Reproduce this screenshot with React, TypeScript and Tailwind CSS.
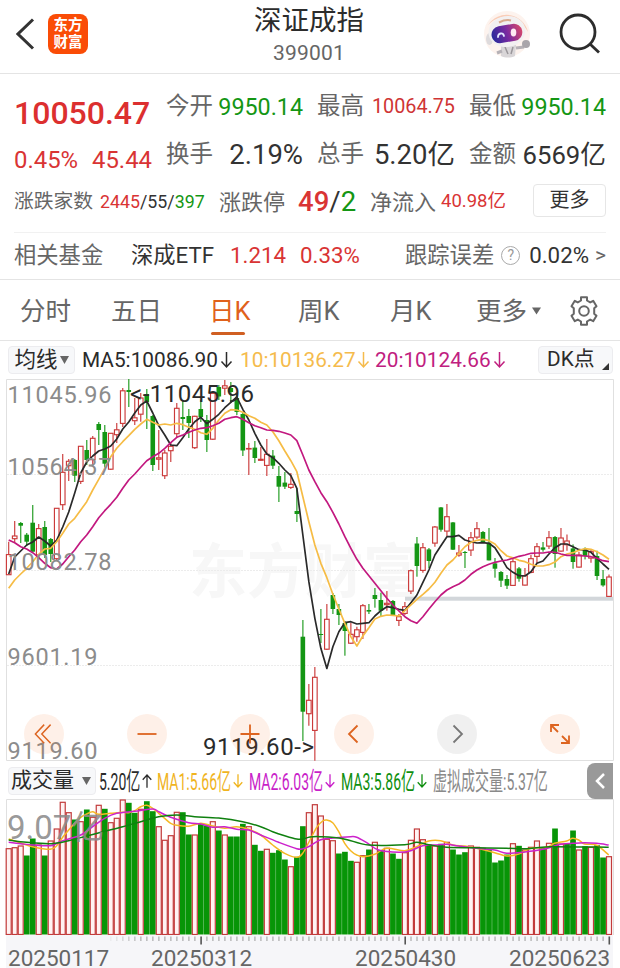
import { memo, type ReactNode } from "react";

const STEP = 6.003;
const FIRST_X = 8.7;
const xAt = (i: number) => FIRST_X + i * STEP;

// [direction, high, body top, body bottom, low]
type Candle = ["r" | "g", number, number, number, number];

const candles: Candle[] = [
  ["r", 541.7, 554.3, 575, 575],
  ["r", 521, 535.7, 539, 542],
  ["g", 522, 523, 525.7, 543],
  ["g", 533, 534.7, 541.7, 546],
  ["g", 505, 522.7, 551.7, 552],
  ["r", 524, 528.3, 555, 558],
  ["g", 521, 527, 555, 558],
  ["g", 538, 539, 554, 562],
  ["r", 508, 508, 559, 560],
  ["r", 454, 472, 505, 510],
  ["r", 459, 461, 466, 481],
  ["g", 459, 460, 475.7, 482],
  ["r", 446, 446, 481.7, 484],
  ["g", 440, 450, 460, 465],
  ["r", 436, 438, 460, 466],
  ["g", 422, 424, 430, 445],
  ["g", 425, 432, 463.7, 468],
  ["r", 433, 433, 469.5, 470],
  ["r", 423, 429.5, 435, 443],
  ["r", 388, 390.5, 423.7, 427],
  ["g", 379, 390, 392, 407],
  ["r", 398, 417.5, 421, 425],
  ["r", 393, 397.7, 414.5, 421.7],
  ["g", 389, 394, 402, 429],
  ["g", 415, 416, 465, 471],
  ["r", 430, 457.5, 459.5, 470],
  ["r", 450, 452.7, 476, 479],
  ["r", 443, 446, 451, 462],
  ["r", 403, 408, 434, 438],
  ["g", 401, 417, 419, 430],
  ["g", 409, 416, 423, 438],
  ["r", 415.7, 416, 448, 449],
  ["g", 400, 409, 417, 422],
  ["g", 415, 420, 440, 452],
  ["r", 392, 393, 439.5, 440],
  ["g", 385, 387, 396.5, 400],
  ["r", 380, 385.5, 388.5, 395],
  ["g", 382, 388, 392, 403],
  ["g", 393, 398, 412, 415],
  ["g", 412, 414, 450.5, 456],
  ["r", 443, 448.2, 449, 475],
  ["g", 441, 447.6, 458, 463],
  ["r", 447, 459, 460.6, 461],
  ["r", 439, 454, 465.7, 476],
  ["g", 450, 455.6, 465.7, 469],
  ["g", 466, 476, 486.7, 502],
  ["g", 472, 482.6, 486.7, 489],
  ["r", 473, 484, 487.7, 489],
  ["g", 488, 511, 514, 522],
  ["g", 620, 636.7, 711.7, 741],
  ["r", 684, 700, 714, 725.7],
  ["r", 667, 677, 730.7, 760.7],
  ["g", 609, 634, 635, 643],
  ["r", 604, 619, 649.5, 650],
  ["g", 593, 595, 609, 614],
  ["g", 604, 609, 615, 625],
  ["g", 621, 623, 631, 655.7],
  ["r", 623, 634, 643.5, 644],
  ["r", 626.7, 629.5, 637, 641.7],
  ["r", 604, 605.4, 632.7, 639],
  ["g", 604, 610, 611.6, 614],
  ["g", 588, 595, 599, 607.7],
  ["g", 592.7, 600, 610.7, 616],
  ["r", 591, 603, 605, 610.7],
  ["g", 600, 601, 615, 616],
  ["r", 614, 616.4, 620.7, 626],
  ["r", 602, 606.4, 613.7, 615],
  ["r", 569.5, 570.4, 591.4, 594],
  ["g", 537, 543.5, 566, 576.7],
  ["r", 543, 547.4, 570.7, 572.7],
  ["g", 548, 549.4, 561, 568],
  ["r", 526, 526.7, 543.4, 546.7],
  ["g", 507, 507.4, 529.7, 531.7],
  ["r", 504, 516.4, 531.4, 536],
  ["g", 522, 522.4, 549.7, 550],
  ["r", 545, 552.7, 555.4, 556.7],
  ["g", 551, 552, 553, 568],
  ["r", 532, 537.4, 550.4, 556],
  ["r", 522, 528.4, 537.4, 539],
  ["g", 531, 532, 542.4, 543],
  ["g", 528, 542.7, 560.4, 560.4],
  ["g", 558, 563.4, 568.7, 577.7],
  ["g", 571, 572, 580.7, 587],
  ["g", 575, 579, 585.7, 589],
  ["r", 558, 561.4, 585.7, 586],
  ["g", 567, 568.4, 578.7, 581.7],
  ["r", 568, 575.4, 585.4, 585.4],
  ["r", 555, 558.4, 572.7, 573.3],
  ["r", 543, 546.4, 556.7, 563],
  ["g", 542, 547.4, 549.7, 551.7],
  ["r", 531, 537.4, 546.4, 549],
  ["g", 536, 537, 554, 567.7],
  ["r", 528, 537.7, 551.4, 551.7],
  ["r", 534.5, 540.7, 545, 550.7],
  ["g", 544.4, 548.4, 562, 568.7],
  ["r", 551.7, 554.7, 567.4, 567.4],
  ["g", 547.4, 548.7, 556, 559.4],
  ["r", 549.4, 551.4, 558.4, 562.7],
  ["g", 550.7, 556, 576, 580],
  ["g", 570, 579, 585.4, 586.7],
  ["r", 574.4, 576.7, 596.7, 597],
];

const ma5 = [
  574, 557, 551, 545, 542, 537, 541, 546, 540, 527, 512, 493, 473, 462, 456,
  451, 449, 446, 439, 429, 422, 413, 405, 401, 413, 425.7, 435, 445, 445.7,
  437.7, 429, 421.7, 417.3, 423.7, 419.3, 414.3, 407.7, 402.3, 397, 409.3, 420,
  433.3, 445, 454, 457.7, 463.3, 470, 475.7, 488.3, 535, 581.7, 618.3, 648.3,
  668.5, 646.7, 631.7, 622.7, 621.7, 624, 623.3, 622.7, 616, 610.7, 606.7,
  607.7, 609.3, 610.3, 602.7, 595, 582.3, 570, 555, 545.7, 536.7, 536.7, 535.3,
  540, 541.7, 543, 542.7, 543.3, 547.7, 557.3, 567.7, 572.3, 575.7, 576, 571.7,
  563.3, 561, 554, 547.7, 544, 544, 546.7, 549.7, 550, 552.3, 558.3, 564,
  569.3,
];

const ma10 = [
  588.3, 580, 574, 568.3, 561.7, 554.3, 549, 548.3, 541.7, 533.3, 524, 518.3,
  510, 501.7, 490, 479.3, 468.3, 456.7, 448.3, 441.7, 435.7, 429.3, 424, 419.3,
  422.3, 425, 424, 425, 423.3, 424.7, 427.3, 429.3, 432.7, 434.3, 428.3, 420,
  413.3, 409.7, 410, 412.3, 415.7, 418.3, 422.3, 425, 431.7, 440.7, 451, 460.7,
  471.7, 496.7, 521.7, 545, 563.3, 577.7, 594.3, 609, 623.3, 636.7, 646, 636,
  627.7, 619, 616.3, 615, 615.3, 616, 610.7, 605, 599.3, 594.3, 589, 582.3,
  573.3, 565, 560, 553.3, 546.7, 542.3, 540.3, 539.3, 540.7, 544, 550.7, 556,
  557.7, 560.3, 561.7, 564.3, 566, 566, 564.7, 562, 556.7, 554, 552.7, 550.3,
  548.7, 549.3, 551.7, 555, 559.3,
];

const ma20 = [
  540, 542.7, 546.7, 549, 552.7, 557.7, 563.3, 567.7, 569, 564, 556.7, 550,
  541.7, 535, 526.7, 517.7, 510.7, 504.3, 497.3, 488.3, 480, 474, 467.3, 460.7,
  456.7, 453.3, 448.3, 442.7, 437.3, 435, 432.3, 430, 428.3, 427.7, 425.7,
  423.3, 419.3, 417.7, 416.7, 419.3, 422.7, 425.7, 427.7, 430, 430.3, 431.3,
  433, 435, 440.7, 455, 470, 481.7, 492.7, 501.7, 512.3, 524, 536.7, 548.3,
  559.3, 568.3, 575.7, 583.3, 590.7, 598.3, 605, 611, 616.7, 620.7, 623.3,
  616.7, 609, 601.7, 595, 590, 586.7, 584, 580, 574.3, 570, 566.7, 564.3,
  562.3, 561, 560, 558.3, 556.3, 555, 553.3, 553, 553, 552, 552.3, 554, 555.3,
  555.3, 555.7, 556, 556.7, 558.3, 560.7, 561.7,
];

const volumes =
  "r848.7 r847.7 r846 g856 g839 r845 g856 r841 r829 r802.3 r812.7 g820 r821.7 g810 r817.3 r805.3 g809.3 r822.7 r818.3 r800 g803.3 g813.3 r809.3 g801.7 g811.7 r826.7 r840.3 r835.7 r812.3 g812.7 g835 r835 g824 g826 r821.7 g831 r835 g837 g837 g824.3 r826.7 g845.3 g851.3 r849.3 g853.3 g850.7 g860 r866.7 g857.3 g826.7 r812.7 r804.7 r816 r839.3 r840.7 g854 g852.3 g861.3 r862.3 r855.7 g850 r842.3 g850.7 r848.3 g854 g859.3 r852.7 r840.3 r829 r839.7 g845 r846 g844.3 r842.3 g850 g855 g852.7 r846 r847.3 g848.3 g850 g863 g861 g855 r843.7 g846.3 r850 r847.3 r841 g848.3 r843.3 g829 r844 g844 g831 r850 g846.7 r847.3 g845.7 g858 r856.7"
    .split(" ")
    .map((v) => ({ up: v[0] === "r", top: Number(v.slice(1)) }));

type Point = [number, number];

const volMa1: Point[] = [
  [8.7, 839], [20, 842.7], [32.7, 846.7], [50, 849.3], [56.7, 845.7],
  [62.7, 837.3], [68.7, 830], [74.7, 823.3], [80.7, 817.3], [86.7, 814],
  [92.7, 811.7], [98.7, 814.3], [110.7, 813.3], [122.7, 812.3], [128.7, 812.7],
  [134.7, 810.7], [140.7, 806.7], [146.7, 805.3], [152.7, 808.3],
  [158.7, 813.3], [164.7, 818.3], [170.7, 823.3], [176.7, 825.3],
  [188.7, 826.3], [200.7, 823.3], [212.7, 826], [224.7, 828.3], [236.7, 826.7],
  [248.7, 829.3], [260.7, 835], [272.7, 845], [284.7, 853.3], [296.7, 857.3],
  [302.7, 853.3], [310, 840], [316.7, 827.3], [322.7, 821], [326.7, 820],
  [332.7, 822.7], [338.7, 831.7], [344.7, 843.3], [350.7, 850.7], [356.7, 855],
  [363.3, 856.7], [374.7, 854.3], [386.7, 848.3], [404.7, 850.7],
  [416.7, 846.7], [428.7, 841], [440.7, 840.7], [452.7, 845], [464.7, 846],
  [476.7, 848.3], [494.7, 852.7], [506.7, 856], [518.7, 854], [530.7, 848.3],
  [542.7, 847.7], [548.7, 846.7], [554.7, 843.3], [566.7, 841], [572.7, 838.3],
  [578.7, 840], [584.7, 844], [596.7, 845.3], [608.7, 855],
];

const volMa2: Point[] = [
  [8.7, 842.3], [20.7, 843.7], [32.7, 845], [50.7, 845.7], [60, 841.7],
  [68.7, 839], [80.7, 835], [92.7, 826.7], [104.7, 818.3], [116.7, 813.3],
  [134.7, 811.3], [152.7, 809], [158.7, 811.7], [170.7, 817.3], [188.7, 822.7],
  [200.7, 824], [212.7, 827.3], [224.7, 826.7], [236.7, 829.3], [248.7, 830],
  [260.7, 835], [278.7, 842.3], [296.7, 848.7], [303, 848.7], [310, 846],
  [320, 840], [332.7, 838], [350.7, 836.7], [356.7, 837.3], [366.7, 842.7],
  [378.7, 850], [398.7, 852.3], [410.7, 850.7], [422.7, 845.7], [434.7, 845],
  [446.7, 844.3], [458.7, 846], [476.7, 848.3], [494.7, 850], [506.7, 853.3],
  [524.7, 852], [542.7, 849.3], [560.7, 844.3], [572.7, 843.3], [584.7, 842.7],
  [596.7, 843.3], [608.7, 845],
];

const volMa3: Point[] = [
  [8.7, 840], [26.7, 842.3], [50.7, 843.7], [68.7, 840.7], [86.7, 836],
  [104.7, 831.3], [122.7, 826.7], [140.7, 821.7], [158.7, 816.7], [176.7, 815],
  [194.7, 816.7], [218.7, 818], [242.7, 821.7], [260.7, 826.7], [272.7, 831.7],
  [284.7, 835.7], [296.7, 839], [303, 839], [310, 837], [320, 836.7],
  [343, 838.7], [368.7, 845], [404.7, 844.7], [416.7, 842.3], [428.7, 844.7],
  [446.7, 847.3], [476.7, 847.7], [506.7, 848.3], [526.7, 848.7], [550, 846.7],
  [608.7, 847.3],
];

// Catmull-Rom through every point, written as cubic segments
const smooth = (pts: Point[]) =>
  pts.reduce((d, p, i) => {
    if (i === 0) return `M${p[0]} ${p[1]}`;
    const p0 = pts[i - 2] ?? pts[i - 1];
    const p1 = pts[i - 1];
    const p3 = pts[i + 1] ?? p;
    return `${d}C${p1[0] + (p[0] - p0[0]) / 6} ${p1[1] + (p[1] - p0[1]) / 6} ${
      p[0] - (p3[0] - p1[0]) / 6
    } ${p[1] - (p3[1] - p1[1]) / 6} ${p[0]} ${p[1]}`;
  }, "");

const linePoints = (values: number[]) =>
  values.map((y, i) => `${xAt(i)},${y}`).join(" ");

const Arrow = ({ up = false, className = "" }) => (
  <svg
    viewBox="0 0 14 18"
    className={`shrink-0 ${className}`}
    fill="none"
    stroke="currentColor"
    strokeWidth="1.5"
  >
    <path d={up ? "M7 17V2M2 7.5L7 2l5 5.5" : "M7 1v15M2 10.5L7 16l5-5.5"} />
  </svg>
);

const Header = () => (
  <header className="flex h-[74px] items-center border-b border-[#e4e4e4] pb-[5px] pl-4 pr-[18px]">
    <svg
      viewBox="0 0 20 32"
      className="h-8 w-5"
      fill="none"
      stroke="#333"
      strokeWidth="3"
    >
      <path d="M17 1.500L2 16l15 14.500" />
    </svg>
    <div className="ml-3 flex h-10 w-10 flex-col items-center justify-center rounded-lg bg-[#fa4c06] pb-px text-[14.500px] font-bold leading-[17px] text-white">
      <span>东方</span>
      <span>财富</span>
    </div>
    <div className="flex flex-1 flex-col items-center pl-[47px] pt-[2px]">
      <h1 className="text-[27.5px] leading-[36px] text-[#2c2c2c]">深证成指</h1>
      <p className="text-[21px] leading-[28px] tracking-[0.2px] text-[#666]">
        399001
      </p>
    </div>
    <svg viewBox="0 0 48 48" className="h-12 w-12">
      <defs>
        <linearGradient id="visor" x1="0" y1="0.4" x2="1" y2="0.3">
          <stop offset="0" stopColor="#2a2a9c" />
          <stop offset="0.5" stopColor="#7b2aa0" />
          <stop offset="1" stopColor="#d8486a" />
        </linearGradient>
      </defs>
      <circle cx="24" cy="24" r="23" fill="#fdf3ee" />
      <path d="M5 15a22 22 0 0 1 40 7c-5-9-12-14-22-15-8 0-13 3-18 8z" fill="#f9cdb8" />
      <path d="M18 35h15l-1 11c-4 2-10 2-14 0z" fill="#d9d6d8" />
      <path d="M19 41l-5 2M33 38l8 -1" stroke="#b5b1b6" strokeWidth="3" />
      <circle cx="43" cy="34" r="4" fill="#a9a5aa" />
      <path d="M22 37l3 7M30 37l-2 7" stroke="#9a969a" strokeWidth="1.500" />
      <ellipse cx="6.500" cy="29" rx="3.500" ry="6" fill="#dedbdd" />
      <ellipse cx="24" cy="21.500" rx="18.500" ry="15.500" fill="#f2f0f1" transform="rotate(-10 24 22)" />
      <path d="M16 12.500c4-2 8-3 12-2" stroke="#d9a98d" strokeWidth="2" fill="none" />
      <rect x="8.500" y="15" width="31" height="17" rx="8.500" fill="url(#visor)" transform="rotate(-10 24 24)" />
      <path d="M15 27c0-4 5-5 6-1" fill="none" stroke="#e3e8ff" strokeWidth="1.800" strokeLinecap="round" />
      <ellipse cx="30.500" cy="22.500" rx="2.800" ry="4" fill="#ffe9f2" />
    </svg>
    <svg
      viewBox="0 0 42 42"
      className="ml-[28px] mr-px h-[42px] w-[42px]"
      fill="none"
      stroke="#2d2d2d"
      strokeWidth="2.800"
    >
      <circle cx="19" cy="19" r="17" />
      <path d="M31 31l9 8.500" />
    </svg>
  </header>
);

const Cell = ({ label, children }: { label: string; children: ReactNode }) => (
  <div className="flex items-center justify-between">
    <span className="text-[23.5px] text-[#666]">{label}</span>
    {children}
  </div>
);

const Quote = () => (
  <section className="h-[206px] border-b border-[#e4e4e4] px-[14px] pt-[9px] text-[#333]">
    <div className="grid grid-cols-[138px_137px_138px_137px] gap-x-[14px]">
      <div className="flex h-12 items-center pt-[12px] text-[32px] font-medium text-[#dc2f2f]">
        10050.47
      </div>
      <Cell label="今开">
        <span className="text-[23.3px] text-[#149614]">9950.14</span>
      </Cell>
      <Cell label="最高">
        <span className="text-[19.8px] text-[#cf3434]">10064.75</span>
      </Cell>
      <Cell label="最低">
        <span className="text-[23.3px] text-[#149614]">9950.14</span>
      </Cell>
      <div className="flex h-12 items-center justify-between pt-3 text-[23.9px] text-[#d93434]">
        <span>0.45%</span>
        <span>45.44</span>
      </div>
      <Cell label="换手">
        <span className="text-[27.5px]">2.19%</span>
      </Cell>
      <Cell label="总手">
        <span className="text-[27.5px]">5.20亿</span>
      </Cell>
      <Cell label="金额">
        <span className="text-[25.7px]">6569亿</span>
      </Cell>
    </div>
    <div className="flex h-[46px] items-center">
      <span className="w-[86px] text-[19.8px] text-[#666]">涨跌家数</span>
      <span className="w-[119px] text-[17.8px]">
        <span className="text-[#d93434]">2445</span>/55/
        <span className="text-[#149614]">397</span>
      </span>
      <span className="w-[79px] text-[22px] text-[#666]">涨跌停</span>
      <span className="w-[72px] text-[27.5px]">
        <span className="font-medium text-[#d93434]">49</span>/
        <span className="text-[#149614]">2</span>
      </span>
      <span className="w-[71px] text-[22px] text-[#666]">净流入</span>
      <span className="text-[18.5px] text-[#d93434]">40.98亿</span>
      <button className="mb-[4px] ml-auto h-[33px] w-[73px] rounded border border-[#e6e6e6] pb-px text-[20px]">
        更多
      </button>
    </div>
    <div className="mt-[7px] flex h-[46px] items-center border-t border-[#f1f1f1] text-[22.3px]">
      <span className="w-[117px] text-[#666]">相关基金</span>
      <span className="w-[99px]">深成ETF</span>
      <span className="w-[70px] text-[#d93434]">1.214</span>
      <span className="text-[#d93434]">0.33%</span>
      <span className="ml-auto text-[#666]">跟踪误差</span>
      <span className="ml-[7px] flex h-[19px] w-[19px] items-center justify-center rounded-full border-[1.5px] border-[#aaa] text-[14px] text-[#999]">
        ?
      </span>
      <span className="ml-[9px]">0.02%</span>
      <span className="ml-[6px] text-[21px] text-[#666]">&gt;</span>
    </div>
  </section>
);

const Tabs = () => (
  <nav className="flex h-[61px] items-center border-b border-[#e4e4e4] pl-5 pt-[2px] text-[25.500px] text-[#666]">
    <span className="w-[91px]">分时</span>
    <span className="w-[98px]">五日</span>
    <span className="relative w-[89px] text-[#e0611b]">
      日K
      <i className="absolute -bottom-[5px] left-[2px] h-[3.500px] w-[34px] rounded-full bg-[#d05f22]" />
    </span>
    <span className="w-[92px]">周K</span>
    <span className="w-[86px]">月K</span>
    <span>更多</span>
    <svg viewBox="0 0 10 8" className="ml-[5px] h-2 w-[9px]" fill="#666">
      <path d="M0 0h10L5 8z" />
    </svg>
    <svg
      viewBox="0 0 30 30"
      className="ml-[28px] h-[30px] w-[30px]"
      fill="none"
      stroke="#666"
      strokeWidth="2"
      strokeLinejoin="round"
    >
      <path d="M12 1.200h6v3.300l3.200 1.900 3-1.600 3.300 5.400-2.300 2.100v5.400l2.300 2.100-3.300 5.400-3-1.600-3.200 1.900v3.300h-6v-3.300l-3.200-1.900-3 1.600-3.300-5.400 2.300-2.100v-5.400L2.500 10.200l3.300-5.400 3 1.600L12 4.500z" />
      <circle cx="15" cy="15" r="4.800" />
    </svg>
  </nav>
);

const MaBar = () => (
  <div className="flex h-[38px] items-center pl-2 pr-[7px] text-[20.800px] text-[#2b2b2b]">
    <div className="flex h-[28px] w-[67px] items-center justify-center rounded border border-[#ececef] bg-[#f7f8fa] text-[21.500px]">
      均线
      <svg viewBox="0 0 9 8" className="ml-[2px] h-2 w-[9px]" fill="#666">
        <path d="M0 0h9L4.500 8z" />
      </svg>
    </div>
    <span className="ml-[7px] w-[137px] pt-[2px]">MA5:10086.90</span>
    <Arrow className="h-[18px] w-[15px]" />
    <span className="ml-[6px] w-[116px] pt-[2px] text-[#f5bb4c]">10:10136.27</span>
    <Arrow className="h-[18px] w-[15px] text-[#f5bb4c]" />
    <span className="ml-[4px] w-[117px] pt-[2px] text-[#c0207f]">20:10124.66</span>
    <Arrow className="h-[18px] w-[15px] text-[#c0207f]" />
    <div className="ml-auto flex h-[28px] w-[75px] items-center rounded border border-[#ececef] bg-[#f7f8fa] pl-[8px]">
      DK点
      <svg viewBox="0 0 8 8" className="ml-auto mr-[3px] mt-3 h-[7px] w-[7px]" fill="#333">
        <path d="M8 0v8H0z" />
      </svg>
    </div>
  </div>
);

const tools = [
  { name: "first", tone: "orange", d: "M19 6L8 17l11 11M27 6L16 17l11 11", narrow: true },
  { name: "zoom out", tone: "orange", d: "M7.500 17h19" },
  { name: "zoom in", tone: "orange", d: "M7.500 17h19M17 7.500v19" },
  { name: "previous", tone: "orange", d: "M20.500 8.500L12 17l8.500 8.500" },
  { name: "next", tone: "gray", d: "M13.500 8.500L22 17l-8.500 8.500" },
  { name: "fullscreen", tone: "orange", d: "M8 15V8h8M8 8l7 7M26 18.500V26h-8M26 26l-7-7" },
];

const priceLabels: [string, number, number][] = [
  ["11045.96", 402.5, 104],
  ["10564.37", 474.5, 104],
  ["10082.78", 570, 104],
  ["9601.19", 665, 90],
  ["9119.60", 758.5, 90],
];

const PriceChart = memo(() => (
  <div className="relative h-[382px]">
    <svg
      viewBox="0 379 620 382"
      className="block h-[382px] w-[620px] overflow-visible"
    >
      <text
        x="189"
        y="593"
        fontSize="59"
        fontWeight="700"
        fill="#f7f7f7"
        textLength="232"
        lengthAdjust="spacingAndGlyphs"
      >
        东方财富
      </text>
      <g stroke="#ececec" strokeDasharray="2 1">
        <path d="M7 474.500H613M7 570.500H613M7 665.500H613" />
      </g>
      <path d="M6.500 760.500V379.500H613.500V760.500z" fill="none" stroke="#e0e0e0" />
      <rect x="405" y="596.700" width="208" height="4" fill="#d2d6da" />
      {candles.map(([dir, high, top, bottom, low], i) => {
        const x = xAt(i);
        if (dir === "g") {
          return (
            <g key={i} fill="#149614">
              <rect x={x - 0.5} y={high} width="1.100" height={low - high} />
              <rect x={x - 2.3} y={top} width="4.600" height={bottom - top} />
            </g>
          );
        }
        return (
          <g key={i} stroke="#cb3a3a" strokeWidth="1.150" fill="#fff">
            <path d={`M${x} ${high}V${low}`} />
            <rect
              x={x - 2.3}
              y={top + 0.3}
              width="4.600"
              height={Math.max(bottom - top - 0.6, 0.5)}
            />
          </g>
        );
      })}
      <g fill="none" strokeWidth="1.700" strokeLinejoin="round">
        <polyline points={linePoints(ma5)} stroke="#2a2a2a" />
        <polyline points={linePoints(ma10)} stroke="#f6bc45" />
        <polyline points={linePoints(ma20)} stroke="#c2187f" />
      </g>
      <g fontSize="23.500" fill="#8c8c8c">
        {priceLabels.map(([text, y, width]) => (
          <text key={text} x="7.500" y={y} textLength={width}>
            {text}
          </text>
        ))}
      </g>
      <g fontSize="24" fill="#2a2a2a">
        <text x="130" y="402" textLength="124">
          &lt;-11045.96
        </text>
        <text x="203" y="755" textLength="111">
          9119.60-&gt;
        </text>
      </g>
    </svg>
    <div className="absolute bottom-[7px] left-[24px] flex gap-[63.200px]">
      {tools.map((t) => (
        <button
          key={t.name}
          aria-label={t.name}
          className={
            t.tone === "gray"
              ? "flex h-10 w-10 items-center justify-center rounded-full bg-[#999]/15 text-[#777]"
              : "flex h-10 w-10 items-center justify-center rounded-full bg-[#f26a21]/10 text-[#dd6420]"
          }
        >
          <svg
            viewBox="0 0 34 34"
            className="h-[34px] w-[34px]"
            fill="none"
            stroke="currentColor"
            strokeWidth="1.800"
          >
            <path
              d={t.d}
              transform={t.narrow ? "translate(2 2.500) scale(0.8 0.85)" : undefined}
            />
          </svg>
        </button>
      ))}
    </div>
  </div>
));

PriceChart.displayName = "PriceChart";

// Indicator text is squeezed horizontally to fit on a single row
const Narrow = ({ children }: { children: ReactNode }) => (
  <span className="inline-block origin-left scale-x-[0.565] whitespace-nowrap">
    {children}
  </span>
);

const VolumeBar = () => (
  <div className="flex h-[38px] items-center pl-2 pr-[7px] pt-px text-[24.800px] text-[#2b2b2b]">
    <div className="flex h-[28px] w-[88px] shrink-0 items-center rounded border border-[#ececef] bg-[#f7f8fa] pl-[2px] text-[21px]">
      成交量
      <svg viewBox="0 0 9 8" className="ml-[8px] h-2 w-[9px]" fill="#666">
        <path d="M0 0h9L4.500 8z" />
      </svg>
    </div>
    <div className="ml-[3px] w-[42px] pt-[2px]">
      <Narrow>5.20亿</Narrow>
    </div>
    <Arrow up className="h-[20px] w-[12px]" />
    <div className="ml-[4px] w-[75px] pt-[2px] text-[#f0b41f]">
      <Narrow>MA1:5.66亿</Narrow>
    </div>
    <Arrow className="h-[20px] w-[12px] text-[#f0b41f]" />
    <div className="ml-[5px] w-[75px] pt-[2px] text-[#c91fc9]">
      <Narrow>MA2:6.03亿</Narrow>
    </div>
    <Arrow className="h-[20px] w-[12px] text-[#c91fc9]" />
    <div className="ml-[5px] w-[75px] pt-[2px] text-[#0f8f0f]">
      <Narrow>MA3:5.86亿</Narrow>
    </div>
    <Arrow className="h-[20px] w-[12px] text-[#0f8f0f]" />
    <div className="ml-[5px] w-[120px] pt-[2px] text-[#8a8a8a]">
      <Narrow>虚拟成交量:5.37亿</Narrow>
    </div>
    <button className="ml-auto flex h-[36px] w-[26px] shrink-0 items-center justify-center rounded-l-lg bg-[#999]">
      <svg viewBox="0 0 10 16" className="h-4 w-[10px]" fill="none" stroke="#fff" strokeWidth="2.500">
        <path d="M9 1L2 8l7 7" />
      </svg>
    </button>
  </div>
);

const VolumeChart = memo(() => (
  <svg viewBox="0 799 620 136" className="block h-[136px] w-[620px]">
    <path d="M6.500 935V799.500H613.500V935" fill="none" stroke="#e0e0e0" />
    {volumes.map(({ up, top }, i) => {
      const x = xAt(i);
      return up ? (
        <rect
          key={i}
          x={x - 2.5}
          y={top}
          width="5"
          height={934.5 - top}
          fill="#fff3f3"
          stroke="#c23b3b"
          strokeWidth="1.200"
        />
      ) : (
        <rect
          key={i}
          x={x - 2.8}
          y={top - 0.5}
          width="5.700"
          height={935 - top}
          fill="#079507"
        />
      );
    })}
    <g fill="none" strokeWidth="1.500">
      <path d={smooth(volMa1)} stroke="#f5b825" />
      <path d={smooth(volMa2)} stroke="#cc22cc" />
      <path d={smooth(volMa3)} stroke="#0f800f" />
    </g>
    <text x="7" y="839" fontSize="33" fill="#8c8c8c" fillOpacity="0.900">
      9.07亿
    </text>
  </svg>
));

VolumeChart.displayName = "VolumeChart";

const DateAxis = () => (
  <div className="ml-[6px] h-[33px] w-[607px] bg-[#f6f6f9] text-[22.500px] text-[#666]">
    <svg viewBox="6 935 607 10" className="block h-[10px] w-[607px]">
      {Array.from({ length: 84 }, (_, n) => n + 17).map((i) => {
        const major = i === 32 || i === 66 || i === 100;
        return (
          <rect
            key={i}
            x={xAt(i) - 0.5}
            y="936.500"
            width={major ? 1.6 : 1.2}
            height={major ? 8 : 4.5}
            fill={major ? "#555" : "#aaa"}
            opacity={i < 22 ? (i - 16) / 6 : 1}
          />
        );
      })}
    </svg>
    <div className="flex pl-[2px] leading-[26px]">
      <span className="w-[143px]">20250117</span>
      <span className="w-[204px]">20250312</span>
      <span className="w-[154px]">20250430</span>
      <span>20250623</span>
    </div>
  </div>
);

export default function App() {
  return (
    <main className="h-[968px] w-[620px] overflow-hidden whitespace-nowrap bg-white font-['Roboto','Noto_Sans_CJK_SC',sans-serif]">
      <Header />
      <Quote />
      <Tabs />
      <MaBar />
      <PriceChart />
      <VolumeBar />
      <VolumeChart />
      <DateAxis />
    </main>
  );
}
